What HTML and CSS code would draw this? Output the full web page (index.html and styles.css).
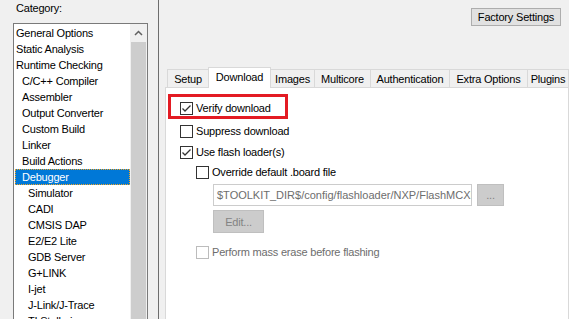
FILE: index.html
```html
<!DOCTYPE html>
<html lang="en">
<head>
  <meta charset="UTF-8" />
  <title>Options</title>
  <link rel="stylesheet" href="styles.css">
</head>
<body>
  <div class="window">

    <aside class="sidebar">
      <div class="caption">Category:</div>
      <div class="listbox">
        <ul class="items">
          <li>General Options</li>
          <li>Static Analysis</li>
          <li>Runtime Checking</li>
          <li class="lvl1">C/C++ Compiler</li>
          <li class="lvl1">Assembler</li>
          <li class="lvl1">Output Converter</li>
          <li class="lvl1">Custom Build</li>
          <li class="lvl1">Linker</li>
          <li class="lvl1">Build Actions</li>
          <li class="lvl1 selected">Debugger</li>
          <li class="lvl2">Simulator</li>
          <li class="lvl2">CADI</li>
          <li class="lvl2">CMSIS DAP</li>
          <li class="lvl2">E2/E2 Lite</li>
          <li class="lvl2">GDB Server</li>
          <li class="lvl2">G+LINK</li>
          <li class="lvl2">I-jet</li>
          <li class="lvl2">J-Link/J-Trace</li>
          <li class="lvl2">TI Stellaris</li>
        </ul>
        <div class="scrollbar">
          <div class="scroll-up">
            <svg width="9" height="6" viewBox="0 0 9 6"><polyline points="1,5 4.5,1.5 8,5" fill="none" stroke="#606060" stroke-width="1.5"/></svg>
          </div>
          <div class="thumb"></div>
        </div>
      </div>
    </aside>

    <div class="splitter"></div>

    <main class="main">
      <div class="toolbar">
        <button class="btn">Factory Settings</button>
      </div>

      <div class="tabs">
        <div class="tab t-setup">Setup</div>
        <div class="tab t-download active">Download</div>
        <div class="tab t-images">Images</div>
        <div class="tab t-multicore">Multicore</div>
        <div class="tab t-auth">Authentication</div>
        <div class="tab t-extra">Extra Options</div>
        <div class="tab t-plugins">Plugins</div>
      </div>

      <div class="panel">
        <div class="check-row">
          <span class="box checked">
            <svg width="11" height="11" viewBox="0 0 11 11"><polyline points="1.5,5.5 4,8 9.5,2.5" fill="none" stroke="#333" stroke-width="1.3"/></svg>
          </span>
          <span class="label">Verify download</span>
        </div>
        <div class="check-row r-suppress">
          <span class="box"></span>
          <span class="label">Suppress download</span>
        </div>
        <div class="check-row r-flash">
          <span class="box checked">
            <svg width="11" height="11" viewBox="0 0 11 11"><polyline points="1.5,5.5 4,8 9.5,2.5" fill="none" stroke="#333" stroke-width="1.3"/></svg>
          </span>
          <span class="label">Use flash loader(s)</span>
        </div>

        <div class="sub">
          <div class="check-row r-override">
            <span class="box"></span>
            <span class="label">Override default .board file</span>
          </div>
          <div class="path-row">
            <div class="path">$TOOLKIT_DIR$/config/flashloader/NXP/FlashMCXN947.board</div>
            <button class="btn btn-off btn-dots">...</button>
          </div>
          <button class="btn btn-off btn-edit">Edit...</button>
          <div class="check-row r-erase">
            <span class="box off"></span>
            <span class="label off">Perform mass erase before flashing</span>
          </div>
        </div>

        <div class="callout"></div>
      </div>
    </main>

  </div>
</body>
</html>
```

FILE: styles.css
```css
body {
  margin: 0;
  font-family: "Liberation Sans", Arial, sans-serif;
  font-size: 11px;
  letter-spacing: -0.2px;
  color: #000;
  background: #f0f0f0;
}

.window {
  display: flex;
  width: 569px;
  height: 319px;
  overflow: hidden;
}

/* left category list */
.sidebar {
  width: 158px;
  flex: none;
}

.caption {
  padding: 2px 0 0 16px;
  height: 13px;
  line-height: 13px;
  margin-bottom: 8px;
}

.listbox {
  display: flex;
  margin-left: 13px;
  width: 135px;
  height: 320px;
  box-sizing: border-box;
  border: 1px solid #7a7a7a;
  background: #fff;
}

.items {
  list-style: none;
  margin: 0;
  padding: 1px 0 0 1px;
  flex: 1;
}

.items li {
  height: 16px;
  line-height: 16px;
  padding-left: 1px;
  white-space: nowrap;
}

.items li.lvl1 {
  padding-left: 7px;
}

.items li.lvl2 {
  padding-left: 13px;
}

.items li.selected {
  background: #0078d7;
  color: #fff;
  outline: 1px dotted #f5a623;
  outline-offset: -1px;
}

.scrollbar {
  width: 17px;
  flex: none;
  display: flex;
  flex-direction: column;
  background: #f0f0f0;
}

.scroll-up {
  height: 18px;
  display: flex;
  align-items: center;
  justify-content: center;
}

.thumb {
  flex: 1;
  margin: 0 1px;
  background: #cdcdcd;
}

.splitter {
  width: 1px;
  flex: none;
  background: #6d6d6d;
}

/* right side */
.main {
  flex: 1;
  min-width: 0;
  display: flex;
  flex-direction: column;
}

.toolbar {
  height: 67px;
  box-sizing: border-box;
  padding: 8px 8px 0 0;
  display: flex;
  justify-content: flex-end;
  align-items: flex-start;
}

.btn {
  font: inherit;
  letter-spacing: inherit;
  color: #000;
  padding: 0;
  width: 90px;
  height: 18px;
  background: #e1e1e1;
  border: 1px solid #adadad;
}

.tabs {
  display: flex;
  align-items: flex-end;
  height: 20px;
  padding-left: 8px;
}

.tab {
  height: 18px;
  box-sizing: border-box;
  border: 1px solid #d9d9d9;
  border-bottom: none;
  margin-right: -1px;
  padding-top: 1px;
  line-height: 16px;
  text-align: center;
  white-space: nowrap;
  background: #f0f0f0;
}

.tab.active {
  height: 21px;
  margin-bottom: -1px;
  background: #fff;
  position: relative;
  z-index: 1;
}

.t-setup { width: 42px; }
.t-download { width: 63px; }
.t-images { width: 45px; }
.t-multicore { width: 57px; }
.t-auth { width: 80px; }
.t-extra { width: 79px; }
.t-plugins { width: 42px; }

.panel {
  flex: 1;
  position: relative;
  margin-left: 6px;
  padding: 14px 0 0 14px;
  border: 1px solid #d9d9d9;
  border-bottom: none;
  background: #fff;
}

.check-row {
  display: flex;
  align-items: center;
  height: 13px;
  line-height: 13px;
}

.r-suppress { margin-top: 10px; }
.r-flash { margin-top: 8px; }
.r-override { margin-top: 7px; }
.r-erase { margin-top: 13px; }

.box {
  width: 13px;
  height: 13px;
  flex: none;
  box-sizing: border-box;
  border: 1px solid #333;
  background: #fff;
  display: flex;
  align-items: center;
  justify-content: center;
}

.box.off {
  border-color: #bcbcbc;
}

.label {
  margin-left: 3px;
  white-space: nowrap;
}

.label.off {
  color: #6d6d6d;
}

.sub {
  margin-left: 16px;
}

.path-row {
  display: flex;
  margin: 5px 0 0 17px;
}

.path {
  width: 259px;
  height: 22px;
  flex: none;
  box-sizing: border-box;
  border: 1px solid #cccccc;
  padding-left: 3px;
  line-height: 20px;
  letter-spacing: 0;
  color: #6d6d6d;
  white-space: nowrap;
  overflow: hidden;
}

.btn-off {
  background: #cccccc;
  border-color: #bfbfbf;
  color: #838383;
}

.btn-dots {
  width: 27px;
  height: 22px;
  margin-left: 5px;
  flex: none;
}

.btn-edit {
  display: block;
  width: 51px;
  height: 23px;
  margin: 4px 0 0 17px;
}

.callout {
  position: absolute;
  left: 2px;
  top: 6px;
  width: 120px;
  height: 25px;
  box-sizing: border-box;
  border: 3px solid #e31b23;
}
```
